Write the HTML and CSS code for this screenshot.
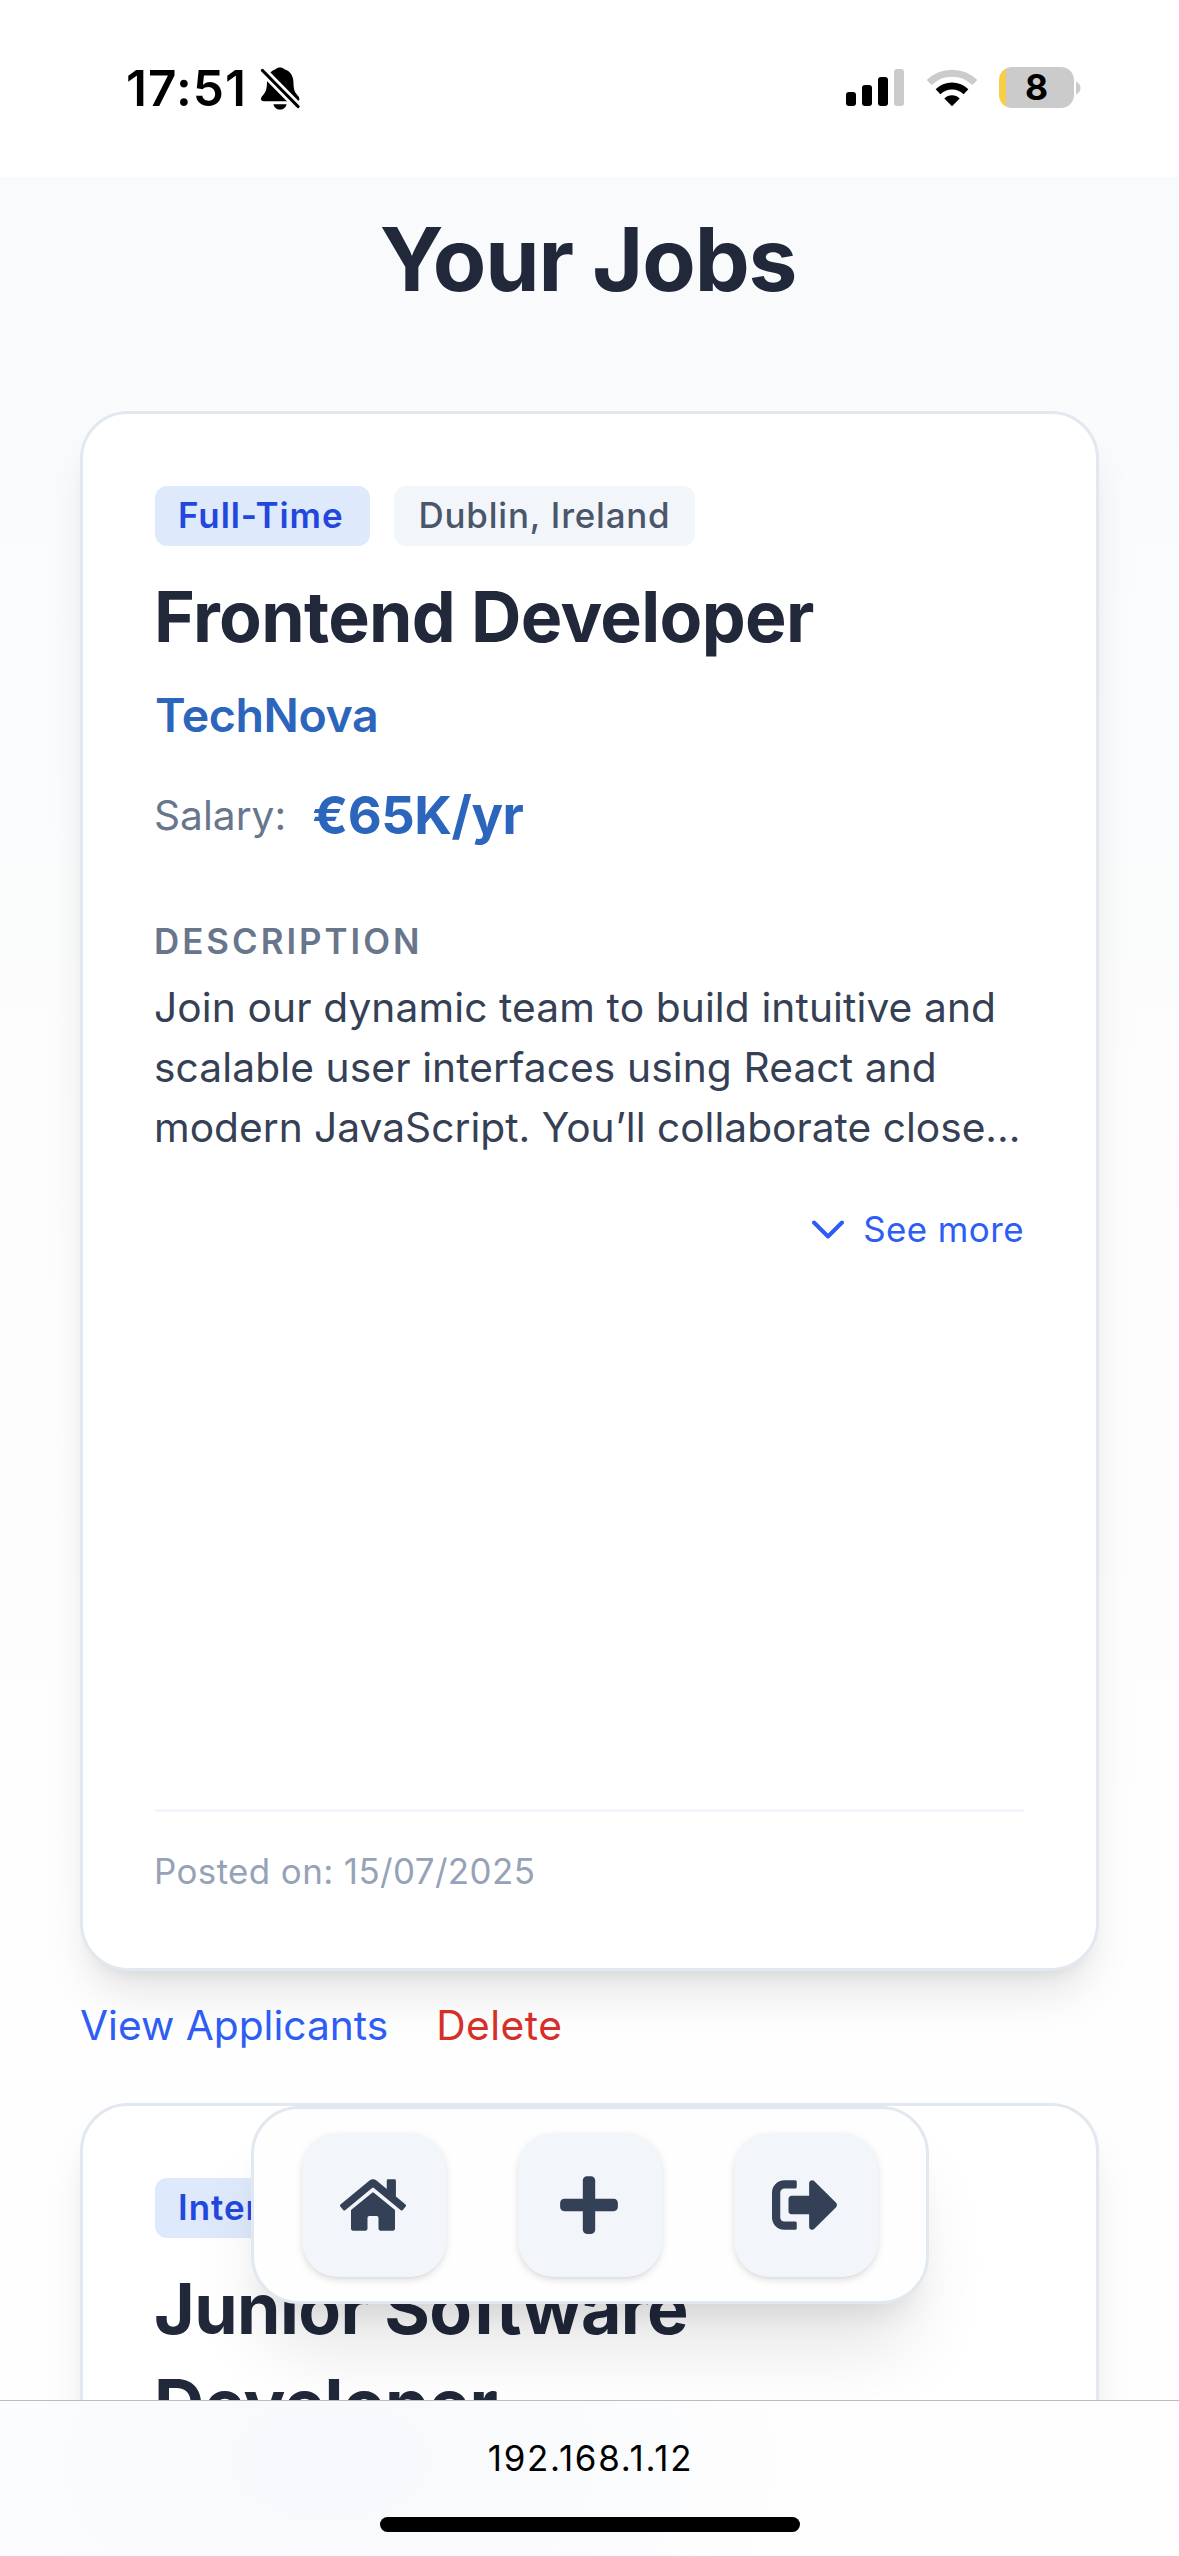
FILE: index.html
```
<!DOCTYPE html>
<html lang="en">
<head>
<meta charset="utf-8">
<title>Your Jobs</title>
<link rel="stylesheet" href="styles.css">
</head>
<body>
<div class="screen">
  <header class="status">
    <div class="status-left">
      <span class="clock">17:51</span>
      <svg class="bell" viewBox="0 0 40 44" width="40" height="44" aria-hidden="true">
        <path d="M20 0.500c1.800 0 3.300 .6 4.400 1.700 5.600 1.600 8.800 6.300 9 12.600.2 7 .9 9.500 3.100 12.200 1.600 2 2.900 3.300 2.900 5 0 1.400-1 2.200-2.600 2.200H3.600C2 34.200 1 33.400 1 32c0-1.700 1.300-3 2.900-5C6.100 24.300 6.800 21.800 7 14.800 7.200 8.500 10.400 3.800 15.600 2.200 16.700 1.100 18.200 0.500 20 0.500z"/>
        <path d="M13.500 37.200h13c-.5 3.200-3 5.300-6.500 5.300s-6-2.100-6.500-5.300z"/>
        <path d="M2.500 3.500L38 39.500" stroke="#fff" stroke-width="8.500" fill="none"/>
        <path d="M2.500 3.500L38 39.500" stroke="#000" stroke-width="3.200" stroke-linecap="round" fill="none"/>
      </svg>
    </div>
    <div class="status-right">
      <svg class="signal" viewBox="0 0 58 38" width="58" height="38" aria-hidden="true">
        <rect x="0" y="23" width="10" height="14" rx="3"/>
        <rect x="16" y="16" width="10" height="21" rx="3"/>
        <rect x="32" y="8" width="10" height="29" rx="3"/>
        <rect x="48" y="0" width="10" height="37" rx="3" fill="#cbcbcb"/>
      </svg>
      <svg class="wifi" viewBox="0 0 52 38" width="52" height="38" aria-hidden="true">
        <path d="M3.200 13.600A32.500 32.500 0 0 1 48.800 13.600" fill="none" stroke="#cbcbcb" stroke-width="7"/>
        <path d="M12 22.700A20 20 0 0 1 40 22.700" fill="none" stroke="#000" stroke-width="6.800"/>
        <path d="M26 37.300L18.300 29.500A11 11 0 0 1 33.700 29.500Z"/>
      </svg>
      <div class="battery">
        <div class="battery-body">8</div>
        <svg viewBox="0 0 5 14" width="5" height="14" aria-hidden="true"><path d="M0 0.500C6 3 6 11 0 13.500Z" fill="#cbcbcb"/></svg>
      </div>
    </div>
  </header>

  <main class="page">
    <h1 class="title">Your Jobs</h1>

    <section class="job">
      <article class="card">
        <div class="tags">
          <span class="tag tag-type">Full-Time</span>
          <span class="tag tag-place">Dublin, Ireland</span>
        </div>
        <h2 class="name">Frontend Developer</h2>
        <p class="company">TechNova</p>
        <p class="salary"><span class="salary-label">Salary:</span><span class="salary-value">€65K/yr</span></p>
        <h3 class="label">DESCRIPTION</h3>
        <p class="description"><span class="line">Join our dynamic team to build intuitive and</span> <span class="line">scalable user interfaces using React and</span> <span class="line line-last">modern JavaScript. You’ll collaborate close...</span></p>
        <a class="more">
          <svg viewBox="0 0 32 20" width="32" height="20" aria-hidden="true"><path d="M2 3.500L16 17.500L30 3.500" fill="none" stroke="currentColor" stroke-width="4" stroke-linecap="round" stroke-linejoin="round"/></svg>
          <span>See more</span>
        </a>
        <footer class="posted">Posted on: 15/07/2025</footer>
      </article>
      <div class="actions">
        <a class="view">View Applicants</a>
        <a class="delete">Delete</a>
      </div>
    </section>

    <section class="job">
      <article class="card">
        <div class="tags">
          <span class="tag tag-type">Internship</span>
        </div>
        <h2 class="name name-junior">Junior Software Developer</h2>
      </article>
    </section>

    <nav class="dock">
      <a class="dock-item" aria-label="Home">
        <svg viewBox="0 0 576 512" width="66" height="66" fill="currentColor"><path d="M280.370 148.260L96 300.110V464a16 16 0 0 0 16 16l112.060-.29a16 16 0 0 0 15.920-16V368a16 16 0 0 1 16-16h64a16 16 0 0 1 16 16v95.640a16 16 0 0 0 16 16.050L464 480a16 16 0 0 0 16-16V300L295.670 148.260a12.190 12.190 0 0 0-15.300 0zM571.600 251.470L488 182.560V44.050a12 12 0 0 0-12-12h-56a12 12 0 0 0-12 12v72.610L318.470 43a48 48 0 0 0-61 0L4.340 251.470a12 12 0 0 0-1.600 16.900l25.500 31A12 12 0 0 0 45.150 301l235.220-193.740a12.190 12.190 0 0 1 15.300 0L530.900 301a12 12 0 0 0 16.900-1.600l25.500-31a12 12 0 0 0-1.700-16.930z"/></svg>
      </a>
      <a class="dock-item" aria-label="Add job">
        <svg viewBox="0 0 448 512" width="66" height="66" fill="currentColor"><path d="M416 208H272V64c0-17.670-14.330-32-32-32h-32c-17.670 0-32 14.330-32 32v144H32c-17.670 0-32 14.330-32 32v32c0 17.670 14.330 32 32 32h144v144c0 17.670 14.330 32 32 32h32c17.670 0 32-14.330 32-32V304h144c17.670 0 32-14.330 32-32v-32c0-17.670-14.330-32-32-32z"/></svg>
      </a>
      <a class="dock-item" aria-label="Sign out">
        <svg viewBox="0 0 512 512" width="66" height="66" fill="currentColor"><path d="M497 273L329 441c-15 15-41 4.500-41-17v-96H152c-13.300 0-24-10.700-24-24v-96c0-13.300 10.700-24 24-24h136V88c0-21.400 25.900-32 41-17l168 168c9.300 9.400 9.300 24.600 0 34zM192 436v-40c0-6.600-5.400-12-12-12H96c-17.700 0-32-14.300-32-32V160c0-17.700 14.300-32 32-32h84c6.600 0 12-5.400 12-12V76c0-6.600-5.400-12-12-12H96c-53 0-96 43-96 96v192c0 53 43 96 96 96h84c6.600 0 12-5.400 12-12z"/></svg>
      </a>
    </nav>
  </main>

  <footer class="browser-bar">
    <span class="address">192.168.1.12</span>
    <span class="home-indicator"></span>
  </footer>
</div>
</body>
</html>
```
FILE: styles.css
```
* { box-sizing: border-box; margin: 0; }

body { font-family: Inter, "Liberation Sans", sans-serif; background: #fff; }

.screen {
  width: 1179px;
  height: 2556px;
  display: flex;
  flex-direction: column;
  overflow: hidden;
}

svg { display: block; flex: none; }

/* Status bar */
.status {
  flex: none;
  height: 177px;
  display: flex;
  justify-content: space-between;
  align-items: flex-start;
  padding: 67px 98px 0 126px;
  color: #000;
}
.status-left { display: flex; align-items: flex-start; }
.clock {
  font-size: 49.5px;
  font-weight: 600;
  line-height: 42px;
  letter-spacing: 0.022em;
  width: 134px;
}
.status-right { display: flex; align-items: flex-start; }
.signal { margin-top: 2px; }
.wifi { margin: 2px 21px 0 22px; }
.battery { display: flex; align-items: center; gap: 2px; }
.battery-body {
  width: 75px;
  height: 41px;
  border-radius: 13px;
  background: linear-gradient(90deg, #f7ce46 6.500px, #cbcbcb 6.500px);
  font-size: 35.500px;
  font-weight: 700;
  line-height: 42px;
  text-align: center;
}

/* Page */
.page {
  flex: 1;
  min-height: 0;
  position: relative;
  overflow: hidden;
  padding: 28px 80px 0;
  background: linear-gradient(180deg, #f8fafc 0, #fdfdfd 1100px, #fefefe 1900px);
}
.title {
  margin-bottom: 98px;
  padding-right: 3px;
  text-align: center;
  font-size: 87.300px;
  font-weight: 700;
  line-height: 108px;
  letter-spacing: -0.013em;
  color: #20283a;
}
.job { margin-bottom: 48px; }
.card {
  height: 1560px;
  display: flex;
  flex-direction: column;
  padding: 72px;
  border: 3px solid #e2e8f0;
  border-radius: 48px;
  background: #fff;
  box-shadow: 0 30px 45px -9px rgba(0, 0, 0, 0.1), 0 12px 18px -12px rgba(0, 0, 0, 0.1);
}
.tags { display: flex; gap: 24px; }
.tag {
  height: 60px;
  padding: 0 26px 0 23px;
  border-radius: 12px;
  font-size: 34.900px;
  font-weight: 500;
  line-height: 58px;
  white-space: nowrap;
}
.tag-type {
  background: #dee9fb;
  color: #2347dc;
  font-weight: 600;
  letter-spacing: 0.028em;
}
.tag-place {
  padding: 0 25px;
  background: #f2f5f9;
  color: #4a566a;
  letter-spacing: 0.023em;
}
.name {
  margin-top: 22.500px;
  margin-left: -1px;
  font-size: 69.800px;
  font-weight: 700;
  line-height: 96px;
  letter-spacing: -0.0095em;
  color: #20283a;
}
.name-junior { letter-spacing: -0.0085em; }
.company {
  margin-top: 14px;
  font-size: 46.500px;
  font-weight: 600;
  line-height: 72px;
  letter-spacing: -0.0085em;
  color: #2c65bc;
}
.salary {
  height: 84px;
  margin-top: 23px;
  display: flex;
  align-items: center;
  gap: 26px;
  margin-left: -1px;
}
.salary-label { font-size: 40.700px; color: #68768c; }
.salary-value {
  padding-bottom: 2px;
  font-size: 52.400px;
  font-weight: 700;
  letter-spacing: -0.008em;
  color: #2c65bc;
}
.label {
  margin-top: 59.500px;
  margin-left: -1px;
  font-size: 34.900px;
  font-weight: 600;
  line-height: 48px;
  letter-spacing: 0.0855em;
  color: #68768c;
}
.description {
  margin-top: 13px;
  margin-left: -1px;
  font-size: 40.700px;
  line-height: 60px;
  letter-spacing: 0.0027em;
  color: #364055;
  white-space: nowrap;
}
.line { display: block; }
.line-last { letter-spacing: 0; }
.more {
  margin-top: 47px;
  display: flex;
  align-items: center;
  justify-content: flex-end;
  gap: 19px;
  font-size: 34.900px;
  line-height: 48px;
  letter-spacing: 0.0126em;
  color: #2d5df5;
}
.posted {
  margin-top: auto;
  padding: 35px 0 1px;
  border-top: 3px solid #f2f5f9;
  font-size: 34.900px;
  line-height: 48px;
  letter-spacing: 0.0115em;
  text-indent: -1px;
  color: #96a2b8;
}
.actions {
  margin-top: 25px;
  margin-bottom: -1px;
  display: flex;
  gap: 48px;
  font-size: 40.700px;
  line-height: 60px;
}
.view { color: #2d5df5; }
.delete { color: #d52f27; letter-spacing: 0.012em; }

/* Floating navigation over the job list */
.dock {
  position: absolute;
  left: 251px;
  top: 1929px;
  width: 678px;
  height: 198px;
  display: flex;
  gap: 72px;
  padding: 24px 48px;
  border: 3px solid #e2e8f0;
  border-radius: 48px;
  background: #fefefe;
  box-shadow: 0 60px 75px -15px rgba(0, 0, 0, 0.1), 0 24px 30px -18px rgba(0, 0, 0, 0.1);
}
.dock-item {
  width: 144px;
  height: 144px;
  display: flex;
  align-items: center;
  justify-content: center;
  padding-right: 2px;
  border-radius: 36px;
  background: #f2f5f9;
  color: #344056;
  box-shadow: 0 3px 9px rgba(0, 0, 0, 0.1), 0 3px 6px -3px rgba(0, 0, 0, 0.1);
}

/* Browser toolbar */
.browser-bar {
  flex: none;
  height: 156px;
  display: flex;
  flex-direction: column;
  align-items: center;
  padding-top: 33px;
  border-top: 1px solid #bcbcbc;
  background: radial-gradient(ellipse 480px 300px at 330px 60px, #f8f9fc 0, #fafbfd 55%, #fefefe 100%);
}
.address {
  font-size: 34.900px;
  line-height: 48px;
  letter-spacing: 0.05em;
  padding-left: 2px;
  color: #000;
}
.home-indicator {
  width: 420px;
  height: 15px;
  margin-top: 35px;
  border-radius: 7.500px;
  background: #000;
}
```
